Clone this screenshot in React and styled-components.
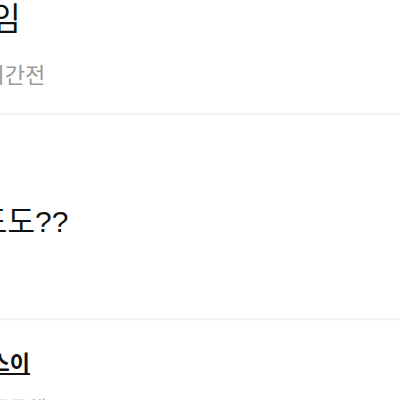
import React from "react";
import styled, { createGlobalStyle } from "styled-components";

const Global = createGlobalStyle`
  html, body { margin: 0; padding: 0; background: #fff; overflow: hidden; }
  body { font-family: "Liberation Sans", "Noto Sans CJK KR", sans-serif; color: #111; }
`;

const Page = styled.div`
  width: 640px;
  margin-left: -108px;
  display: flex;
  flex-direction: column;
`;

const Header = styled.header`
  display: flex;
  flex-direction: column;
  padding-bottom: 22px;
`;

const Title = styled.h1`
  margin: 0;
  padding-left: 11px;
  font-size: 32px;
  line-height: 38px;
  font-weight: 400;
  color: #111;
  white-space: nowrap;
`;

const Meta = styled.div`
  margin-top: 23px;
  font-size: 22px;
  line-height: 30px;
  color: #9a9a9a;
  white-space: nowrap;
`;

const Divider = styled.hr`
  margin: 0;
  border: 0;
  height: 2px;
  background: #f2f2f2;
  border-bottom: 1px solid #fbfbfb;
`;

const Body = styled.section`
  padding: 86px 0 76px 5px;
`;

const BodyText = styled.p`
  margin: 0;
  font-size: 30px;
  line-height: 40px;
  color: #111;
  white-space: nowrap;
`;

const Comments = styled.section`
  padding: 28px 0 0 57px;
  display: flex;
  flex-direction: column;
  gap: 16px;
`;

const Author = styled.a`
  font-size: 22px;
  line-height: 30px;
  font-weight: 700;
  color: #111;
  text-decoration: underline;
  white-space: nowrap;
`;

const CommentText = styled.p`
  margin: 0;
  font-size: 20px;
  line-height: 28px;
  color: #aaa;
  white-space: nowrap;
`;

export default function App() {
  return (
    <>
      <Global />
      <Page>
        <Header>
          <Title>테스트임</Title>
          <Meta>익명이 · 3시간전</Meta>
        </Header>
        <Divider />
        <Body>
          <BodyText>이게뭐도도??</BodyText>
        </Body>
        <Divider />
        <Comments>
          <Author>하늘스이</Author>
          <CommentText>저도 궁금해요</CommentText>
        </Comments>
      </Page>
    </>
  );
}
